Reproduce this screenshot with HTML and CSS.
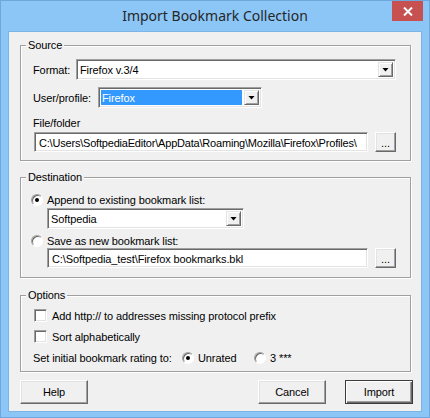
FILE: index.html
```html
<!DOCTYPE html>
<html>
<head>
<meta charset="utf-8">
<title>Import Bookmark Collection</title>
<link rel="stylesheet" href="styles.css">
</head>
<body>
<div class="window">
  <div class="titlebar">
    <div class="title">Import Bookmark Collection</div>
    <div class="close">
      <svg width="10" height="9" viewBox="0 0 10 9"><path d="M1 0.5 L9 8.5 M9 0.5 L1 8.5" stroke="#fff" stroke-width="2"/></svg>
    </div>
  </div>
  <div class="client">
    <div class="group group-source">
      <span class="legend">Source</span>
      <div class="row">
        <span class="lbl lbl-format">Format:</span>
        <div class="field combo combo-format">
          <span class="value">Firefox v.3/4</span>
          <span class="drop"><span class="arrow"></span></span>
        </div>
      </div>
      <div class="row row-user">
        <span class="lbl lbl-user">User/profile:</span>
        <div class="field combo combo-user">
          <span class="value selected">Firefox</span>
          <span class="drop"><span class="arrow"></span></span>
        </div>
      </div>
      <div class="caption">File/folder</div>
      <div class="row path-row">
        <div class="field textbox textbox-src"><span class="value value-path">C:\Users\SoftpediaEditor\AppData\Roaming\Mozilla\Firefox\Profiles\</span></div>
        <button class="btn btn-browse">...</button>
      </div>
    </div>

    <div class="group group-dest">
      <span class="legend">Destination</span>
      <div class="opt-row">
        <span class="radio checked"></span><span class="opt-text">Append to existing bookmark list:</span>
      </div>
      <div class="row row-list">
        <div class="field combo combo-list">
          <span class="value">Softpedia</span>
          <span class="drop"><span class="arrow"></span></span>
        </div>
      </div>
      <div class="opt-row opt-row-2">
        <span class="radio"></span><span class="opt-text">Save as new bookmark list:</span>
      </div>
      <div class="row path-row path-row-dest">
        <div class="field textbox textbox-dest"><span class="value">C:\Softpedia_test\Firefox bookmarks.bkl</span></div>
        <button class="btn btn-browse">...</button>
      </div>
    </div>

    <div class="group group-options">
      <span class="legend">Options</span>
      <div class="chk-row">
        <span class="check"></span><span class="chk-text">Add http:// to addresses missing protocol prefix</span>
      </div>
      <div class="chk-row chk-row-2">
        <span class="check"></span><span class="chk-text">Sort alphabetically</span>
      </div>
      <div class="rating-row">
        <span class="rating-label">Set initial bookmark rating to:</span>
        <span class="rating-opt rating-opt-1"><span class="radio checked"></span><span class="rating-text">Unrated</span></span>
        <span class="rating-opt"><span class="radio"></span><span class="rating-text">3 ***</span></span>
      </div>
    </div>

    <div class="buttons">
      <button class="btn btn-dlg">Help</button>
      <button class="btn btn-dlg btn-cancel">Cancel</button>
      <button class="btn btn-dlg btn-default">Import</button>
    </div>
  </div>
</div>
</body>
</html>
```

FILE: styles.css
```css
html, body {
  margin: 0;
  padding: 0;
}

body {
  font-family: "Liberation Sans", Arial, sans-serif;
  font-size: 11px;
  letter-spacing: -0.1px;
  color: #000;
  background: #8cc6f6;
}

.window {
  width: 430px;
  height: 418px;
  box-sizing: border-box;
  border: 1px solid #6ea7db;
  background: #8cc6f6;
  display: flex;
  flex-direction: column;
}

.titlebar {
  height: 30px;
  display: grid;
  grid-template-columns: 1fr auto 1fr;
}

.title {
  grid-column: 2;
  align-self: center;
  font-family: "Noto Sans", "Open Sans", sans-serif;
  font-size: 14px;
  letter-spacing: 0;
  color: #262626;
  padding-bottom: 1px;
}

.close {
  grid-column: 3;
  justify-self: end;
  align-self: start;
  width: 31px;
  height: 20px;
  margin-right: 6px;
  background: #c75050;
  display: flex;
  align-items: center;
  justify-content: center;
}

.client {
  margin: 0 7px;
  height: 381px;
  box-sizing: border-box;
  border: 1px solid #7db4e6;
  background: #f0f0f0;
  padding: 13px 10px 0 11px;
  display: flex;
  flex-direction: column;
}

/* group boxes */
.group {
  position: relative;
  border: 1px solid #a0a0a0;
  box-shadow: inset 1px 1px 0 #fff, 1px 1px 0 #fff;
  display: flex;
  flex-direction: column;
}

.legend {
  position: absolute;
  top: -8px;
  left: 5px;
  padding: 0 2px;
  line-height: 14px;
  background: #f0f0f0;
}

.group-source {
  padding: 13px 14px 8px 12px;
}

.group-dest {
  margin-top: 16px;
  padding: 15px 14px 9px 12px;
}

.group-options {
  margin-top: 17px;
  padding: 13px 14px 7px 12px;
}

/* rows */
.row {
  display: flex;
  align-items: center;
  height: 21px;
}

.row-user {
  margin-top: 7px;
}

.lbl-format {
  width: 43px;
}

.lbl-user {
  width: 65px;
}

.caption {
  margin-top: 8px;
  height: 14px;
  line-height: 14px;
}

.path-row {
  height: 20px;
  margin-top: 2px;
}

.path-row-dest {
  margin-top: 1px;
}

/* sunken fields */
.field {
  box-sizing: border-box;
  height: 21px;
  background: #fff;
  border: 1px solid;
  border-color: #a0a0a0 #fff #fff #a0a0a0;
  box-shadow: inset 1px 1px 0 #696969, inset -1px -1px 0 #e3e3e3;
  display: flex;
  align-items: stretch;
  padding: 2px;
}

.value {
  flex: 1;
  overflow: hidden;
  white-space: nowrap;
  padding-left: 1px;
  line-height: 17px;
}

.value-path {
  letter-spacing: -0.2px;
}

.selected {
  background: #3399ff;
  color: #fff;
  margin-right: 2px;
}

.combo-format {
  width: 320px;
}

.combo-user {
  width: 164px;
}

.combo-list {
  width: 197px;
  margin-left: 14px;
}

.textbox {
  height: 20px;
  padding: 2px 2px 2px 3px;
}

.textbox .value {
  line-height: 16px;
}

.textbox-src {
  width: 336px;
  margin-left: 1px;
}

.textbox-dest {
  width: 323px;
  margin-left: 14px;
}

.drop {
  width: 15px;
  box-sizing: border-box;
  background: #f0f0f0;
  border: 1px solid;
  border-color: #e3e3e3 #696969 #696969 #e3e3e3;
  box-shadow: inset 1px 1px 0 #fff, inset -1px -1px 0 #a0a0a0;
  display: flex;
  align-items: center;
  justify-content: center;
}

.arrow {
  width: 7px;
  height: 4px;
  background: #000;
  clip-path: polygon(0 0, 100% 0, 50% 100%);
}

/* buttons */
.btn {
  font: inherit;
  letter-spacing: inherit;
  color: #000;
  margin: 0;
  padding: 0;
  box-sizing: border-box;
  background: #f0f0f0;
  border: 1px solid;
  border-color: #fff #696969 #696969 #fff;
  box-shadow: inset -1px -1px 0 #a0a0a0, inset 1px 1px 0 #e3e3e3;
  appearance: none;
  -webkit-appearance: none;
  cursor: default;
}

.btn-browse {
  width: 21px;
  height: 20px;
  margin-left: 7px;
  line-height: 14px;
  padding-top: 2px;
}

.buttons {
  margin-top: 8px;
  margin-right: -2px;
  display: flex;
}

.btn-dlg {
  width: 68px;
  height: 24px;
}

.btn-cancel {
  margin-left: auto;
}

.btn-default {
  margin-left: 19px;
  border-color: #3c3c3c;
  box-shadow: inset 1px 1px 0 #fff, inset -1px -1px 0 #696969, inset -2px -2px 0 #a0a0a0;
}

/* radios and checkboxes */
.radio {
  width: 12px;
  height: 12px;
  box-sizing: border-box;
  border-radius: 50%;
  background: #fff;
  border: 1px solid;
  border-color: #a0a0a0 #fff #fff #a0a0a0;
  box-shadow: inset 1px 1px 0 #696969;
  display: inline-flex;
  align-items: center;
  justify-content: center;
  flex: none;
}

.radio.checked::after {
  content: "";
  width: 4px;
  height: 4px;
  border-radius: 50%;
  background: #000;
}

.opt-row {
  display: flex;
  align-items: center;
  height: 13px;
  margin-left: -2px;
}

.opt-row-2 {
  margin-top: 5px;
}

.opt-text {
  margin-left: 4px;
}

.row-list {
  margin-top: 2px;
}

.check {
  width: 13px;
  height: 13px;
  box-sizing: border-box;
  background: #fff;
  border: 1px solid;
  border-color: #a0a0a0 #fff #fff #a0a0a0;
  box-shadow: inset 1px 1px 0 #696969, inset -1px -1px 0 #e3e3e3;
  flex: none;
}

.chk-row {
  display: flex;
  align-items: center;
  height: 13px;
  margin-left: 1px;
}

.chk-row-2 {
  margin-top: 8px;
}

.chk-text {
  margin-left: 5px;
}

.rating-row {
  display: flex;
  align-items: center;
  height: 13px;
  margin-top: 8px;
}

.rating-label {
  width: 149px;
}

.rating-opt {
  display: flex;
  align-items: center;
}

.rating-opt-1 {
  width: 72px;
}

.rating-text {
  margin-left: 4px;
}
```
